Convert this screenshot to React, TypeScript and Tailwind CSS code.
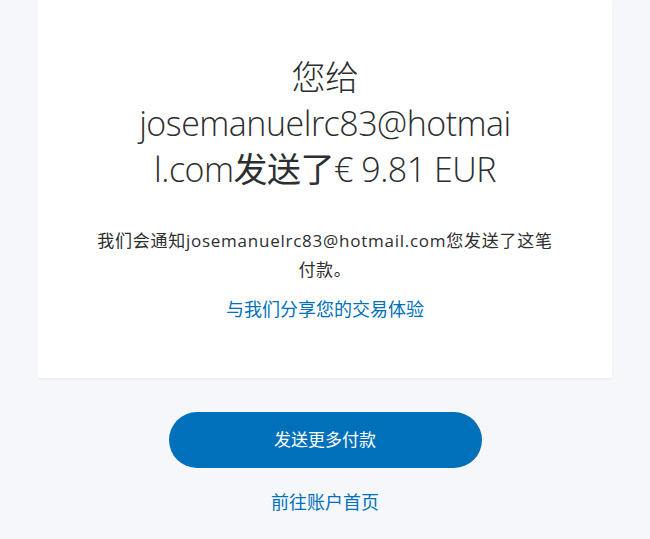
import React from 'react';

const font = { fontFamily: '"Open Sans", "Noto Sans CJK SC", sans-serif' };

export default function App() {
  return (
    <div className="min-h-[539px] w-[650px] bg-[#f5f7fa] text-[#2c2e2f]" style={font}>
      <div className="mx-[38px] flex h-[379px] flex-col items-center border-b border-[#eceef1] bg-white pt-[54px] shadow-[0_1px_2px_rgba(0,0,0,0.03)]">
        <h1 className="text-center text-[34px] font-light leading-[46px] tracking-[-0.5px]">
          <span className="block">您给</span>
          <span className="block">josemanuelrc83@hotmai</span>
          <span className="block">
            l.com<span className="font-normal">发送了</span>€ 9.81 EUR
          </span>
        </h1>
        <p className="mt-[34px] text-center text-[17px] leading-[29px] tracking-[0.75px]">
          我们会通知josemanuelrc83@hotmail.com您发送了这笔
          <br />
          付款。
        </p>
        <a className="mt-[12px] text-[18px] leading-[26px] text-[#0070ba]" href="#">
          与我们分享您的交易体验
        </a>
      </div>
      <div className="flex flex-col items-center pt-[33px]">
        <button
          className="h-[56px] w-[313px] rounded-full bg-[#0070ba] text-[17px] text-white"
          type="button"
        >
          发送更多付款
        </button>
        <a className="mt-[21px] text-[18px] leading-[26px] text-[#0070ba]" href="#">
          前往账户首页
        </a>
      </div>
    </div>
  );
}
